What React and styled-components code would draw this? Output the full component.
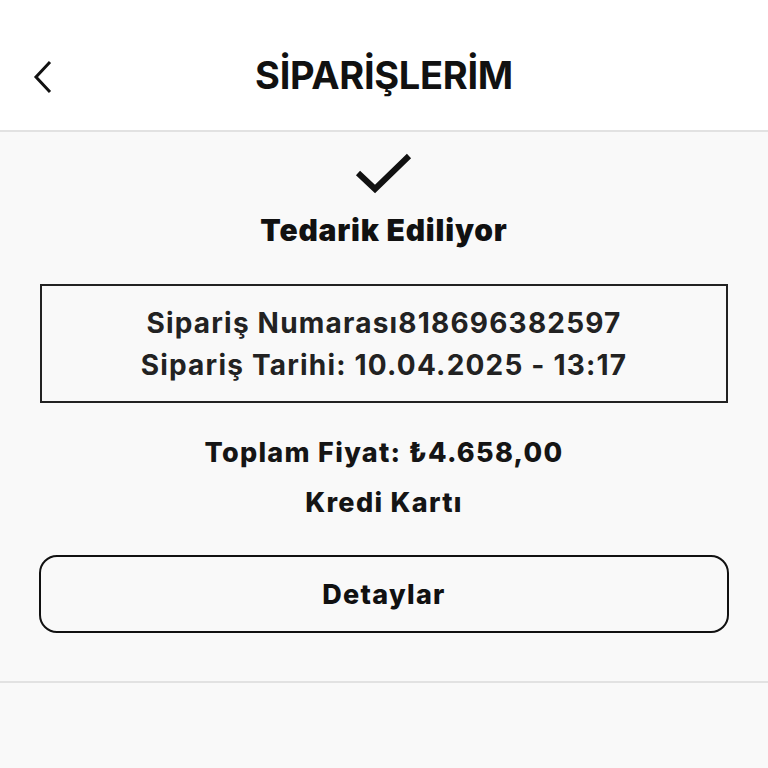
import styled, { createGlobalStyle } from "styled-components";

const GlobalStyle = createGlobalStyle`
  html, body {
    margin: 0;
    padding: 0;
    background: #f9f9f9;
    font-family: Inter, "Noto Sans", sans-serif;
    color: #111;
  }
`;

export default function App() {
  return (
    <>
      <GlobalStyle />
      <Page>
        <Header>
          <BackButton aria-label="Geri">
            <svg width="22" height="34" viewBox="0 0 22 34" fill="none">
              <path d="M18 2 L4 17 L18 32" stroke="#111" strokeWidth="3" />
            </svg>
          </BackButton>
          <Title>SİPARİŞLERİM</Title>
        </Header>

        <Content>
          <svg width="58" height="42" viewBox="0 0 58 42" fill="none">
            <path d="M3 21 L20 37 L54 4" stroke="#111" strokeWidth="6" />
          </svg>
          <Status>Tedarik Ediliyor</Status>

          <InfoBox>
            <InfoLine>Sipariş Numarası818696382597</InfoLine>
            <InfoLine>Sipariş Tarihi: 10.04.2025 - 13:17</InfoLine>
          </InfoBox>

          <Summary>
            <SummaryLine>Toplam Fiyat: ₺4.658,00</SummaryLine>
            <SummaryLine>Kredi Kartı</SummaryLine>
          </Summary>

          <DetailsButton>Detaylar</DetailsButton>
        </Content>
      </Page>
    </>
  );
}

const Page = styled.div`
  min-height: 768px;
  background: #f9f9f9;
`;

const Header = styled.header`
  position: relative;
  height: 132px;
  background: #ffffff;
  border-bottom: 2px solid #e2e2e2;
  display: flex;
  align-items: center;
  justify-content: center;
  padding-top: 20px;
  box-sizing: border-box;
`;

const BackButton = styled.button`
  position: absolute;
  left: 32px;
  top: 60px;
  background: none;
  border: none;
  padding: 0;
  display: flex;
`;

const Title = styled.h1`
  margin: 0;
  font-size: 38px;
  font-weight: 700;
  letter-spacing: -0.3px;
`;

const Content = styled.main`
  display: flex;
  flex-direction: column;
  align-items: center;
  padding: 20px 39px 48px;
  border-bottom: 2px solid #e2e2e2;
`;

const Status = styled.h2`
  margin: 18px 0 0;
  font-size: 30px;
  font-weight: 900;
  letter-spacing: 0.8px;
  line-height: 36px;
`;

const InfoBox = styled.section`
  align-self: stretch;
  margin: 36px 1px 0;
  height: 119px;
  box-sizing: border-box;
  border: 2px solid #222;
  display: flex;
  flex-direction: column;
  align-items: center;
  justify-content: center;
  gap: 8px;
`;

const InfoLine = styled.p`
  margin: 0;
  font-size: 28px;
  font-weight: 700;
  color: #222;
  line-height: 34px;
  letter-spacing: 1.2px;
`;

const Summary = styled.div`
  display: flex;
  flex-direction: column;
  align-items: center;
  gap: 16px;
  margin-top: 33px;
`;

const SummaryLine = styled.p`
  margin: 0;
  font-size: 27px;
  font-weight: 800;
  color: #151515;
  line-height: 34px;
  letter-spacing: 1.3px;
`;

const DetailsButton = styled.button`
  align-self: stretch;
  margin-top: 35px;
  height: 78px;
  background: transparent;
  border: 2px solid #111;
  border-radius: 18px;
  font-family: Inter, "Noto Sans", sans-serif;
  font-size: 27px;
  font-weight: 800;
  letter-spacing: 1.3px;
  color: #111;
`;
